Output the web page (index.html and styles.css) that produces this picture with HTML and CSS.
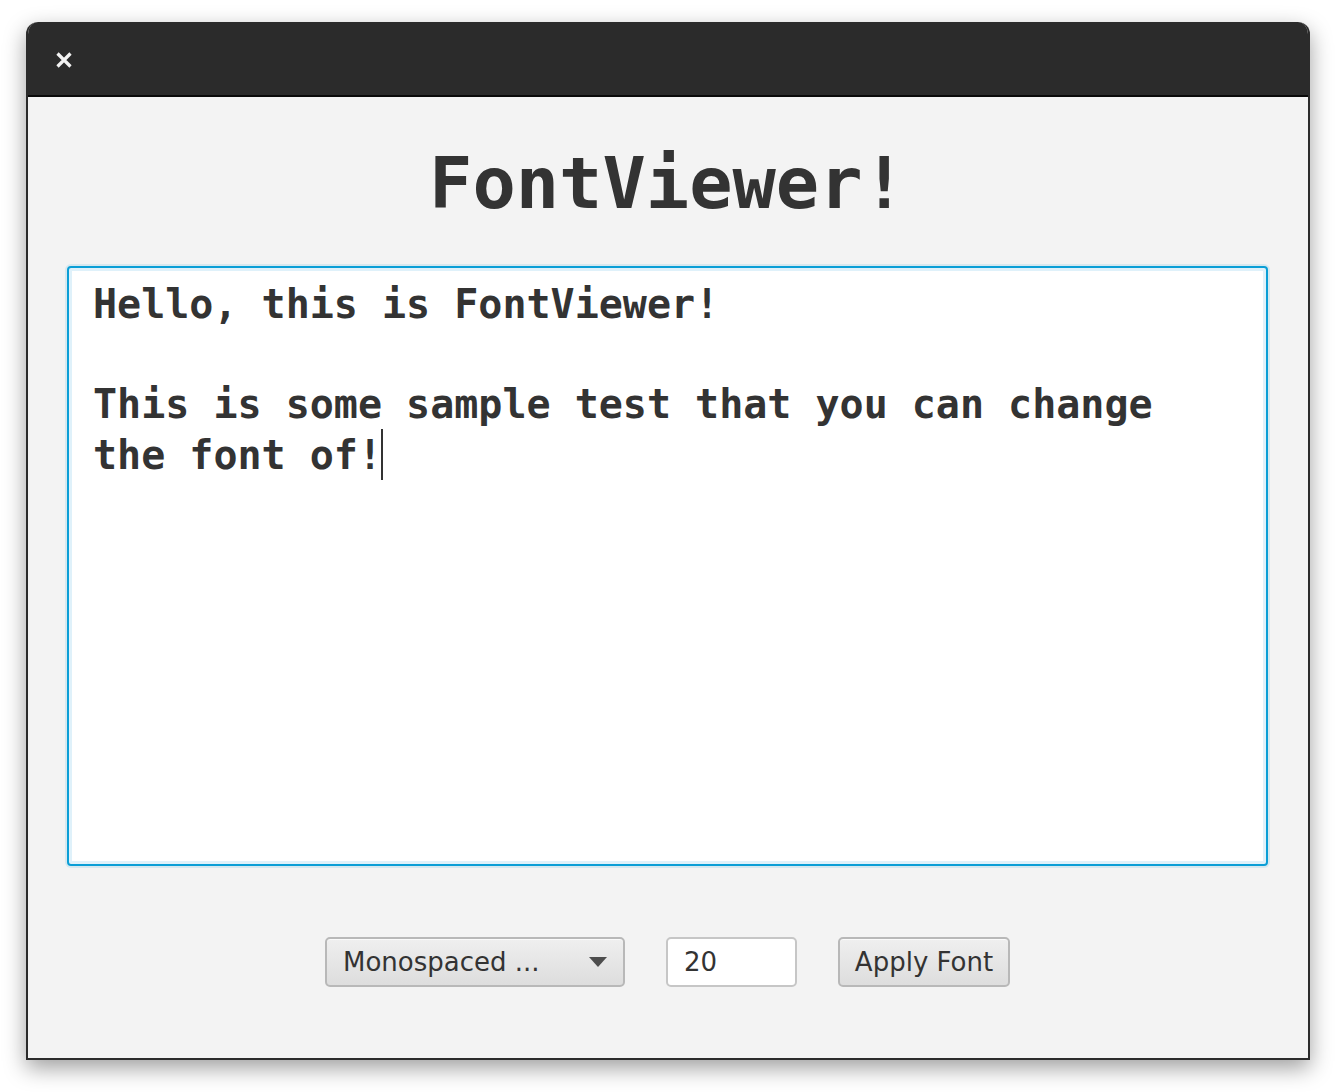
FILE: index.html
```html
<!DOCTYPE html>
<html>
<head>
<meta charset="utf-8">
<title>FontViewer</title>
<link rel="stylesheet" href="styles.css">
</head>
<body>
<div class="window">
  <div class="titlebar">
    <svg class="close" width="18" height="18" viewBox="0 0 18 18"><path d="M2.5 2.5 L15.5 15.5 M15.5 2.5 L2.5 15.5" stroke="#f2f2f2" stroke-width="3.2" stroke-linecap="butt"/></svg>
  </div>
  <div class="content">
    <h1 class="title">FontViewer!</h1>
    <div class="textarea"><div class="line">Hello, this is FontViewer!</div><div class="line">&nbsp;</div><div class="line">This is some sample test that you can change</div><div class="line">the font of!<span class="caret"></span></div></div>
    <div class="controls">
      <div class="combo"><span>Monospaced ...</span><span class="arrow"></span></div>
      <div class="field">20</div>
      <div class="button">Apply Font</div>
    </div>
  </div>
</div>
</body>
</html>
```
FILE: styles.css
```css
html, body {
  margin: 0;
  padding: 0;
  background: #ffffff;
}
body {
  padding: 22px 0 0 26px;
  width: 1336px;
  height: 1092px;
  box-sizing: border-box;
  overflow: hidden;
}
.window {
  width: 1284px;
  box-sizing: border-box;
  border: 2px solid #2b2b2b;
  border-top: none;
  border-radius: 12px 12px 0 0;
  background: #f3f3f3;
  box-shadow: 0 8px 22px rgba(0, 0, 0, 0.38);
  overflow: hidden;
}
.titlebar {
  height: 73px;
  margin: 0 -2px;
  background: #2b2b2b;
  border-bottom: 2px solid #0a0a0a;
  border-radius: 12px 12px 0 0;
  display: flex;
  align-items: center;
  padding-left: 29px;
}
.close {
  display: block;
  margin-top: 2px;
}
.content {
  display: flex;
  flex-direction: column;
  align-items: stretch;
  padding: 50px 40px 71px 39px;
}
.title {
  margin: 0;
  font-family: "DejaVu Sans Mono", monospace;
  font-weight: bold;
  font-size: 72px;
  line-height: 72px;
  height: 72px;
  color: #333333;
  text-align: center;
}
.textarea {
  margin-top: 47px;
  height: 600px;
  box-sizing: border-box;
  background: #ffffff;
  border: 2px solid #0a9ed6;
  border-radius: 4px;
  box-shadow: 0 0 0 2px rgba(10, 158, 214, 0.12), inset 0 0 0 3px #dff1fa;
  padding: 11px 17px 0 24px;
  font-family: "DejaVu Sans Mono", monospace;
  font-weight: bold;
  font-size: 40px;
  line-height: 50px;
  color: #333333;
}
.line {
  white-space: pre;
  height: 50px;
}
.caret {
  display: inline-block;
  width: 0;
  height: 51px;
  border-left: 2px solid #333333;
  vertical-align: -11px;
  margin-left: -1px;
}
.controls {
  margin-top: 71px;
  display: flex;
  justify-content: center;
  gap: 41px;
  height: 50px;
  font-family: "DejaVu Sans", sans-serif;
  font-size: 26px;
  color: #333333;
}
.combo, .field, .button {
  box-sizing: border-box;
  height: 50px;
  display: flex;
  align-items: center;
  border-radius: 5px;
}
.combo {
  width: 300px;
  padding: 0 16px 0 16px;
  justify-content: space-between;
  border: 2px solid #b8b8b8;
  background: linear-gradient(#efefef, #dddddd);
  box-shadow: inset 0 1px 0 #fafafa;
}
.arrow {
  width: 0;
  height: 0;
  border-left: 9px solid transparent;
  border-right: 9px solid transparent;
  border-top: 10px solid #4d4d4d;
}
.field {
  width: 131px;
  padding-left: 16px;
  background: #ffffff;
  border: 2px solid #c6c6c6;
}
.button {
  width: 172px;
  justify-content: center;
  border: 2px solid #b8b8b8;
  background: linear-gradient(#efefef, #dddddd);
  box-shadow: inset 0 1px 0 #fafafa;
}
```
